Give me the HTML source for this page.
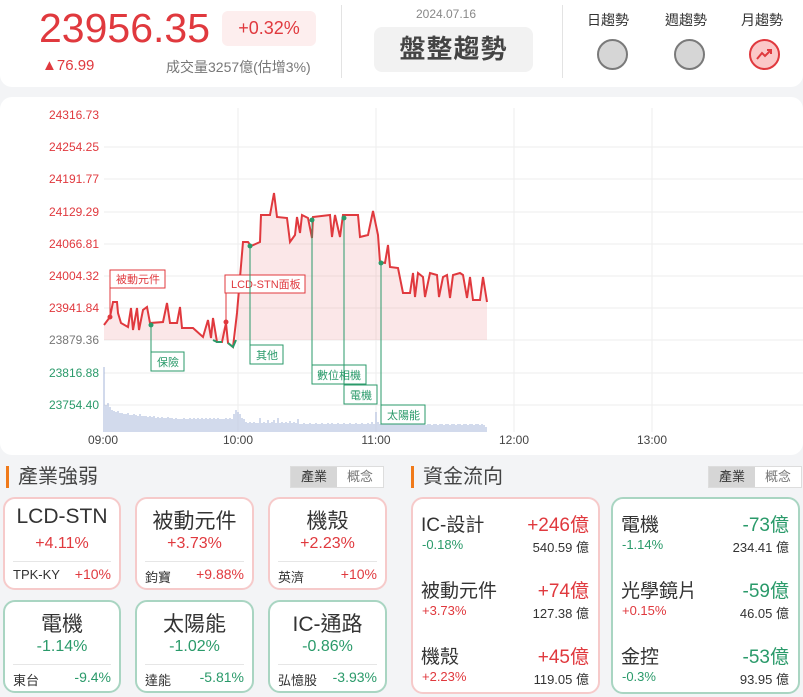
<!DOCTYPE html><html><head><meta charset="utf-8"><style>
*{box-sizing:border-box;margin:0;padding:0}
body{width:803px;height:697px;background:#f3f4f6;font-family:"Liberation Sans","Noto Sans CJK TC",sans-serif;position:relative;overflow:hidden;color:#333}
.a{position:absolute}
.red{color:#e0393e}.grn{color:#2a9a6a}
.card{position:absolute;background:#fff;border-radius:12px;border:2px solid #f6caca}
.card.g{border-color:#a9d5c2}
.card .t{position:absolute;left:0;right:0;top:6px;text-align:center;font-size:21px;color:#333}
.card .p{position:absolute;left:0;right:0;top:36px;text-align:center;font-size:16px}
.card .ln{position:absolute;left:8px;right:8px;top:62px;border-top:1px solid #e6e6e6}
.card .s{position:absolute;left:8px;top:68px;font-size:13px;color:#333}
.card .v{position:absolute;right:8px;top:67px;font-size:14px}
.title{position:absolute;font-size:20px;color:#444;padding-left:9px;border-left:3px solid #f07a1a;line-height:22px}
.tog{position:absolute;width:94px;height:22px;border:1px solid #ddd;font-size:13px;display:flex}
.tog span{flex:1;text-align:center;line-height:20px;color:#777;background:#fff}
.tog span:first-child{background:#d6d6d6;color:#333}
.fr{position:absolute;font-size:19px;color:#333}
.fv{position:absolute;font-size:19px;text-align:right}
.fp{position:absolute;font-size:13px}
.fa{position:absolute;font-size:13px;color:#333;text-align:right}
</style></head><body>
<div class="a" style="left:0;top:0;width:803px;height:87px;background:#fff;border-radius:0 0 12px 12px"></div>
<div class="a red" style="left:39px;top:5px;font-size:41px;letter-spacing:0px">23956.35</div>
<div class="a red" style="left:222px;top:11px;width:94px;height:35px;background:#fdeeee;border-radius:6px;font-size:18px;text-align:center;line-height:35px">+0.32%</div>
<div class="a red" style="left:42px;top:57px;font-size:15px">▲76.99</div>
<div class="a" style="left:166px;top:57px;font-size:14px;color:#777">成交量3257億(估增3%)</div>
<div class="a" style="left:341px;top:5px;width:1px;height:73px;background:#e3e3e3"></div>
<div class="a" style="left:562px;top:5px;width:1px;height:73px;background:#e3e3e3"></div>
<div class="a" style="left:396px;top:7px;width:100px;text-align:center;font-size:12px;color:#888">2024.07.16</div>
<div class="a" style="left:374px;top:27px;width:159px;height:45px;background:#f2f2f2;border-radius:8px;font-size:26px;font-weight:bold;color:#444;text-align:center;line-height:45px;letter-spacing:1px">盤整趨勢</div>
<div class="a" style="left:587px;top:10px;font-size:14px;color:#333">日趨勢</div>
<div class="a" style="left:665px;top:10px;font-size:14px;color:#333">週趨勢</div>
<div class="a" style="left:741px;top:10px;font-size:14px;color:#333">月趨勢</div>
<div class="a" style="left:597px;top:39px;width:31px;height:31px;border-radius:50%;background:#d6d6d6;border:2px solid #7a7a7a"></div>
<div class="a" style="left:674px;top:39px;width:31px;height:31px;border-radius:50%;background:#d6d6d6;border:2px solid #7a7a7a"></div>
<div class="a" style="left:749px;top:39px;width:31px;height:31px;border-radius:50%;background:#fbc8c8;border:2px solid #e0393e"></div>
<svg class="a" style="left:749px;top:39px" width="31" height="31"><path d="M8 20 L13 14 L16 17 L22 11 M18 11 H22 V15" fill="none" stroke="#e0393e" stroke-width="2"/></svg>

<div class="a" style="left:0;top:97px;width:803px;height:358px;background:#fff;border-radius:12px"></div>
<svg class="a" style="left:0;top:97px" width="803" height="358" font-family="Liberation Sans" font-size="12">
<g transform="translate(0,-97)">
<g stroke="#eee" stroke-width="1">
<line x1="104" y1="147" x2="803" y2="147"/><line x1="104" y1="179" x2="803" y2="179"/><line x1="104" y1="212" x2="803" y2="212"/><line x1="104" y1="244" x2="803" y2="244"/><line x1="104" y1="276" x2="803" y2="276"/><line x1="104" y1="308" x2="803" y2="308"/><line x1="104" y1="340" x2="803" y2="340"/><line x1="104" y1="373" x2="803" y2="373"/><line x1="104" y1="405" x2="803" y2="405"/>
<line x1="238" y1="108" x2="238" y2="432"/><line x1="376" y1="108" x2="376" y2="432"/><line x1="514" y1="108" x2="514" y2="432"/><line x1="652" y1="108" x2="652" y2="432"/>
</g>
<g text-anchor="end" fill="#e0393e">
<text x="99" y="119">24316.73</text><text x="99" y="151">24254.25</text><text x="99" y="183">24191.77</text><text x="99" y="216">24129.29</text><text x="99" y="248">24066.81</text><text x="99" y="280">24004.32</text><text x="99" y="312">23941.84</text>
<text x="99" y="344" fill="#777">23879.36</text>
<text x="99" y="377" fill="#2a9a6a">23816.88</text><text x="99" y="409" fill="#2a9a6a">23754.40</text>
</g>
<g text-anchor="middle" fill="#444" font-size="12"><text x="103" y="444">09:00</text><text x="238" y="444">10:00</text><text x="376" y="444">11:00</text><text x="514" y="444">12:00</text><text x="652" y="444">13:00</text></g>
<path d="M104 325 L110 317 L113 302 L117 302 L118 313 L121 323 L128 327 L131 308 L133 330 L137 308 L139 330 L143 310 L147 307 L150 323 L163 322 L167 303 L170 323 L177 323 L180 307 L182 328 L193 328 L203 337 L208 320 L211 338 L213 318 L217 340 L226 323 L228 340 L236 340 L237 313 L243 242 L248 242 L251 246 L260 242 L261 215 L270 215 L274 193 L277 217 L287 218 L290 242 L295 235 L297 217 L300 233 L302 215 L308 218 L312 238 L313 217 L330 215 L332 237 L335 215 L340 237 L343 215 L358 215 L360 237 L368 235 L373 211 L378 235 L380 262 L385 263 L388 245 L390 267 L398 268 L403 293 L410 293 L413 273 L415 297 L418 273 L423 277 L425 297 L430 273 L437 275 L439 297 L443 277 L447 275 L450 298 L453 275 L460 273 L463 275 L467 298 L470 277 L473 300 L480 300 L483 277 L487 302 L487 340 L104 340 Z" fill="#e0393e" fill-opacity="0.12"/>
<path d="M104 325 L110 317 L113 302 L117 302 L118 313 L121 323 L128 327 L131 308 L133 330 L137 308 L139 330 L143 310 L147 307 L150 323 L163 322 L167 303 L170 323 L177 323 L180 307 L182 328 L193 328 L203 337 L208 320 L211 338 L213 318 L217 342 L222 342 L226 323 L228 343 L233 347 L237 313 L243 242 L248 242 L251 246 L260 242 L261 215 L270 215 L274 193 L277 217 L287 218 L290 242 L295 235 L297 217 L300 233 L302 215 L308 218 L312 238 L313 217 L330 215 L332 237 L335 215 L340 237 L343 215 L358 215 L360 237 L368 235 L373 211 L378 235 L380 262 L385 263 L388 245 L390 267 L398 268 L403 293 L410 293 L413 273 L415 297 L418 273 L423 277 L425 297 L430 273 L437 275 L439 297 L443 277 L447 275 L450 298 L453 275 L460 273 L463 275 L467 298 L470 277 L473 300 L480 300 L483 277 L487 302" fill="none" stroke="#e0393e" stroke-width="2"/>
<path d="M213 340 L217 342 L222 342 M228 343 L233 347 L236 340" fill="none" stroke="#2a9a6a" stroke-width="2"/>
<g stroke="#7f95c8" stroke-width="0.7">
<path d="M104 432V367 M106 432V405 M108 432V403 M110 432V407 M112 432V410 M114 432V411 M116 432V412 M118 432V411 M120 432V413 M122 432V413 M124 432V414 M126 432V414 M128 432V413 M130 432V415 M132 432V415 M134 432V414 M136 432V415 M138 432V416 M140 432V414 M142 432V416 M144 432V416 M146 432V416 M148 432V417 M150 432V416 M152 432V417 M154 432V416 M156 432V418 M158 432V417 M160 432V418 M162 432V417 M164 432V418 M166 432V418 M168 432V417 M170 432V418 M172 432V418 M174 432V419 M176 432V418 M178 432V419 M180 432V419 M182 432V419 M184 432V418 M186 432V419 M188 432V419 M190 432V418 M192 432V419 M194 432V418 M196 432V419 M198 432V418 M200 432V419 M202 432V418 M204 432V419 M206 432V418 M208 432V419 M210 432V418 M212 432V419 M214 432V418 M216 432V419 M218 432V418 M220 432V419 M222 432V419 M224 432V419 M226 432V418 M228 432V419 M230 432V418 M232 432V419 M234 432V414 M236 432V410 M238 432V412 M240 432V414 M242 432V418 M244 432V419 M246 432V422 M248 432V423 M250 432V422 M252 432V423 M254 432V422 M256 432V423 M258 432V423 M260 432V418 M262 432V423 M264 432V422 M266 432V423 M268 432V420 M270 432V423 M272 432V422 M274 432V420 M276 432V423 M278 432V418 M280 432V423 M282 432V422 M284 432V423 M286 432V422 M288 432V423 M290 432V421 M292 432V423 M294 432V422 M296 432V423 M298 432V419 M300 432V424 M302 432V424 M304 432V423 M306 432V424 M308 432V424 M310 432V423 M312 432V424 M314 432V424 M316 432V423 M318 432V424 M320 432V424 M322 432V423 M324 432V424 M326 432V424 M328 432V423 M330 432V424 M332 432V423 M334 432V424 M336 432V424 M338 432V423 M340 432V424 M342 432V424 M344 432V423 M346 432V424 M348 432V424 M350 432V423 M352 432V424 M354 432V424 M356 432V423 M358 432V424 M360 432V424 M362 432V423 M364 432V424 M366 432V424 M368 432V423 M370 432V424 M372 432V422 M374 432V424 M376 432V412 M378 432V422 M380 432V424 M382 432V424 M384 432V423 M386 432V424 M388 432V424 M390 432V423 M392 432V424 M394 432V424 M396 432V423 M398 432V424 M400 432V424 M402 432V423 M404 432V424 M406 432V424 M408 432V423 M410 432V424 M412 432V424 M414 432V423 M416 432V424 M418 432V424 M420 432V423 M422 432V424 M424 432V424 M426 432V425 M428 432V424 M430 432V424 M432 432V425 M434 432V424 M436 432V424 M438 432V425 M440 432V424 M442 432V424 M444 432V425 M446 432V424 M448 432V424 M450 432V425 M452 432V424 M454 432V424 M456 432V425 M458 432V424 M460 432V424 M462 432V425 M464 432V424 M466 432V424 M468 432V425 M470 432V424 M472 432V424 M474 432V425 M476 432V424 M478 432V424 M480 432V425 M482 432V424 M484 432V425 M486 432V427"/>
</g>
<g font-size="11">
<line x1="110" y1="288" x2="110" y2="317" stroke="#e0393e"/><rect x="110" y="270" width="55" height="18" fill="#fff" stroke="#e0393e"/><text x="116" y="283" fill="#e0393e">被動元件</text>
<line x1="226" y1="293" x2="226" y2="322" stroke="#e0393e"/><rect x="225" y="275" width="80" height="18" fill="#fff" stroke="#e0393e"/><text x="231" y="288" fill="#e0393e">LCD-STN面板</text>
<line x1="151" y1="325" x2="151" y2="352" stroke="#2a9a6a"/><rect x="151" y="352" width="33" height="19" fill="#fff" stroke="#2a9a6a"/><text x="157" y="366" fill="#2a9a6a">保險</text>
<line x1="250" y1="246" x2="250" y2="345" stroke="#2a9a6a"/><rect x="250" y="345" width="33" height="19" fill="#fff" stroke="#2a9a6a"/><text x="256" y="359" fill="#2a9a6a">其他</text>
<line x1="312" y1="220" x2="312" y2="365" stroke="#2a9a6a"/><rect x="312" y="365" width="54" height="19" fill="#fff" stroke="#2a9a6a"/><text x="317" y="379" fill="#2a9a6a">數位相機</text>
<line x1="344" y1="218" x2="344" y2="385" stroke="#2a9a6a"/><rect x="344" y="385" width="33" height="19" fill="#fff" stroke="#2a9a6a"/><text x="350" y="399" fill="#2a9a6a">電機</text>
<line x1="381" y1="263" x2="381" y2="405" stroke="#2a9a6a"/><rect x="381" y="405" width="44" height="19" fill="#fff" stroke="#2a9a6a"/><text x="387" y="419" fill="#2a9a6a">太陽能</text>
<g fill="#e0393e"><circle cx="110" cy="317" r="2.5"/><circle cx="226" cy="322" r="2.5"/></g>
<g fill="#2a9a6a"><circle cx="151" cy="325" r="2.5"/><circle cx="250" cy="246" r="2.5"/><circle cx="312" cy="220" r="2.5"/><circle cx="344" cy="218" r="2.5"/><circle cx="381" cy="263" r="2.5"/></g>
</g>
</g></svg>

<div class="title" style="left:6px;top:466px">產業強弱</div>
<div class="tog" style="left:290px;top:466px"><span>產業</span><span>概念</span></div>
<div class="card" style="left:3px;top:497px;width:118px;height:93px"><div class="t">LCD-STN</div><div class="p red">+4.11%</div><div class="ln"></div><div class="s">TPK-KY</div><div class="v red">+10%</div></div>
<div class="card" style="left:135px;top:497px;width:119px;height:93px"><div class="t">被動元件</div><div class="p red">+3.73%</div><div class="ln"></div><div class="s">鈞寶</div><div class="v red">+9.88%</div></div>
<div class="card" style="left:268px;top:497px;width:119px;height:93px"><div class="t">機殼</div><div class="p red">+2.23%</div><div class="ln"></div><div class="s">英濟</div><div class="v red">+10%</div></div>
<div class="card g" style="left:3px;top:600px;width:118px;height:93px"><div class="t">電機</div><div class="p grn">-1.14%</div><div class="ln"></div><div class="s">東台</div><div class="v grn">-9.4%</div></div>
<div class="card g" style="left:135px;top:600px;width:119px;height:93px"><div class="t">太陽能</div><div class="p grn">-1.02%</div><div class="ln"></div><div class="s">達能</div><div class="v grn">-5.81%</div></div>
<div class="card g" style="left:268px;top:600px;width:119px;height:93px"><div class="t">IC-通路</div><div class="p grn">-0.86%</div><div class="ln"></div><div class="s">弘憶股</div><div class="v grn">-3.93%</div></div>

<div class="title" style="left:411px;top:466px">資金流向</div>
<div class="tog" style="left:708px;top:466px"><span>產業</span><span>概念</span></div>
<div class="card" style="left:411px;top:497px;width:189px;height:197px"></div>
<div class="card g" style="left:611px;top:497px;width:189px;height:197px"></div>

<div class="fr" style="left:421px;top:510px">IC-設計</div><div class="fv red" style="right:214px;top:510px">+246億</div>
<div class="fp grn" style="left:422px;top:537px">-0.18%</div><div class="fa" style="right:214px;top:537px">540.59 億</div>
<div class="fr" style="left:421px;top:576px">被動元件</div><div class="fv red" style="right:214px;top:576px">+74億</div>
<div class="fp red" style="left:422px;top:603px">+3.73%</div><div class="fa" style="right:214px;top:603px">127.38 億</div>
<div class="fr" style="left:421px;top:642px">機殼</div><div class="fv red" style="right:214px;top:642px">+45億</div>
<div class="fp red" style="left:422px;top:669px">+2.23%</div><div class="fa" style="right:214px;top:669px">119.05 億</div>

<div class="fr" style="left:621px;top:510px">電機</div><div class="fv grn" style="right:14px;top:510px">-73億</div>
<div class="fp grn" style="left:622px;top:537px">-1.14%</div><div class="fa" style="right:14px;top:537px">234.41 億</div>
<div class="fr" style="left:621px;top:576px">光學鏡片</div><div class="fv grn" style="right:14px;top:576px">-59億</div>
<div class="fp red" style="left:622px;top:603px">+0.15%</div><div class="fa" style="right:14px;top:603px">46.05 億</div>
<div class="fr" style="left:621px;top:642px">金控</div><div class="fv grn" style="right:14px;top:642px">-53億</div>
<div class="fp grn" style="left:622px;top:669px">-0.3%</div><div class="fa" style="right:14px;top:669px">93.95 億</div>
</body></html>
